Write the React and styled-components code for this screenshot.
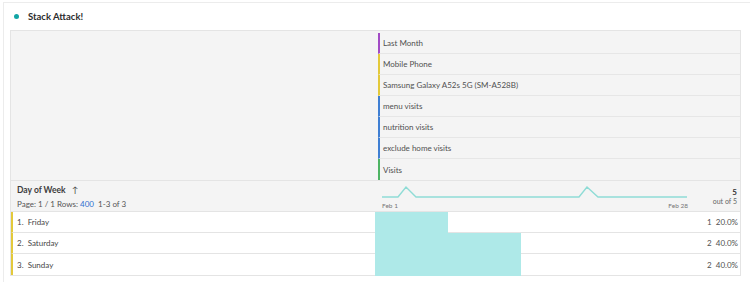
import React from "react";
import styled, { createGlobalStyle } from "styled-components";

const GlobalStyle = createGlobalStyle`
  body {
    margin: 0;
    background: #fff;
    font-family: Lato, "Open Sans", sans-serif;
    color: #4b4b4b;
  }
`;

const segments = [
  { label: "Last Month", color: "#a24bc5" },
  { label: "Mobile Phone", color: "#e3c93a" },
  { label: "Samsung Galaxy A52s 5G (SM-A528B)", color: "#e3c93a" },
  { label: "menu visits", color: "#3f7fd3" },
  { label: "nutrition visits", color: "#3f7fd3" },
  { label: "exclude home visits", color: "#3f7fd3" },
  { label: "Visits", color: "#4eb463" },
];

const rows = [
  { n: 1, day: "Friday", count: 1, pct: 20 },
  { n: 2, day: "Saturday", count: 2, pct: 40 },
  { n: 3, day: "Sunday", count: 2, pct: 40 },
];

export default function App() {
  return (
    <>
      <GlobalStyle />
      <Card>
        <Title>
          <Dot />
          <h1>Stack Attack!</h1>
        </Title>
        <Table>
          <Header>
            <Blank />
            <Segments>
              {segments.map((s) => (
                <Segment key={s.label} $color={s.color}>
                  {s.label}
                </Segment>
              ))}
            </Segments>
          </Header>
          <DimRow>
            <DimInfo>
              <h2>
                Day of Week <span>↑</span>
              </h2>
              <p>
                Page: 1 / 1 Rows: <a>400</a>&nbsp; 1-3 of 3
              </p>
            </DimInfo>
            <Spark>
              <svg width="306" height="18" viewBox="0 0 306 18">
                <polyline
                  points="0,13 16,13 24,3 34,13 197,13 205,3 216,13 305,13"
                  fill="none"
                  stroke="#8fdcd6"
                  strokeWidth="1.4"
                />
              </svg>
              <SparkDates>
                <span>Feb 1</span>
                <span>Feb 28</span>
              </SparkDates>
            </Spark>
            <Total>
              <b>5</b>
              <span>out of 5</span>
            </Total>
          </DimRow>
          {rows.map((r) => (
            <DataRow key={r.n}>
              <Name>
                {r.n}.&nbsp; {r.day}
              </Name>
              <Value>
                <Bar style={{ width: `${r.pct}%` }} />
                <Num>
                  {r.count}&nbsp; {r.pct.toFixed(1)}%
                </Num>
              </Value>
            </DataRow>
          ))}
        </Table>
      </Card>
    </>
  );
}

const Card = styled.div`
  margin: 2px 0 0 3px;
  border-top: 1px solid #ececec;
  border-left: 1px solid #ececec;
  height: 280px;
  box-sizing: border-box;
  padding: 0 9px 0 6px;
`;

const Title = styled.div`
  display: flex;
  align-items: center;
  height: 27px;
  padding-left: 4px;
  h1 {
    margin: 0 0 0 9px;
    font-size: 9.5px;
    font-weight: 700;
    color: #2c2c2c;
  }
`;

const Dot = styled.span`
  width: 5px;
  height: 5px;
  border-radius: 50%;
  background: #12a5a5;
`;

const Table = styled.div`
  border: 1px solid #e4e4e4;
  font-size: 8px;
`;

const Header = styled.div`
  display: grid;
  grid-template-columns: 367px 1fr;
  background: #f4f4f4;
  padding-top: 2px;
`;

const Blank = styled.div``;

const Segments = styled.div`
  display: flex;
  flex-direction: column;
`;

const Segment = styled.div`
  height: 21px;
  display: flex;
  align-items: center;
  padding-left: 3px;
  border-left: 2px solid ${(p) => p.$color};
  border-bottom: 1px solid #e6e6e6;
  box-sizing: border-box;
  color: #505050;
  &:last-child {
    border-bottom: none;
  }
`;

const DimRow = styled.div`
  display: grid;
  grid-template-columns: 367px 1fr auto;
  background: #f4f4f4;
  border-top: 1px solid #e4e4e4;
  border-bottom: 1px solid #e4e4e4;
  height: 32px;
  box-sizing: border-box;
`;

const DimInfo = styled.div`
  padding: 4px 0 0 6px;
  h2 {
    margin: 0;
    font-size: 8.5px;
    font-weight: 700;
    color: #3c3c3c;
    span {
      margin-left: 4px;
      font-weight: 400;
    }
  }
  p {
    margin: 4px 0 0;
    font-size: 8px;
    color: #555;
  }
  a {
    color: #2f6fd0;
  }
`;

const Spark = styled.div`
  padding: 3px 0 0 4px;
  width: 306px;
  svg {
    display: block;
  }
`;

const SparkDates = styled.div`
  display: flex;
  justify-content: space-between;
  font-size: 6.5px;
  color: #777;
`;

const Total = styled.div`
  display: flex;
  flex-direction: column;
  align-items: flex-end;
  padding: 7px 3px 0 0;
  font-size: 7px;
  color: #666;
  b {
    font-size: 8px;
    color: #333;
    line-height: 9px;
  }
`;

const DataRow = styled.div`
  display: grid;
  grid-template-columns: 362px 1fr;
  height: 21px;
  border-left: 2px solid #e3c93a;
  border-bottom: 1px solid #e4e4e4;
  box-sizing: border-box;
  background: #fff;
  &:last-child {
    border-bottom: none;
  }
`;

const Name = styled.div`
  display: flex;
  align-items: center;
  padding-left: 4px;
  color: #474747;
`;

const Value = styled.div`
  position: relative;
  display: flex;
  align-items: center;
  justify-content: flex-end;
  padding-right: 2px;
`;

const Bar = styled.div`
  position: absolute;
  left: 0;
  top: 0;
  bottom: -1px;
  background: #aee9e8;
`;

const Num = styled.span`
  position: relative;
  font-size: 8px;
  color: #505050;
`;
